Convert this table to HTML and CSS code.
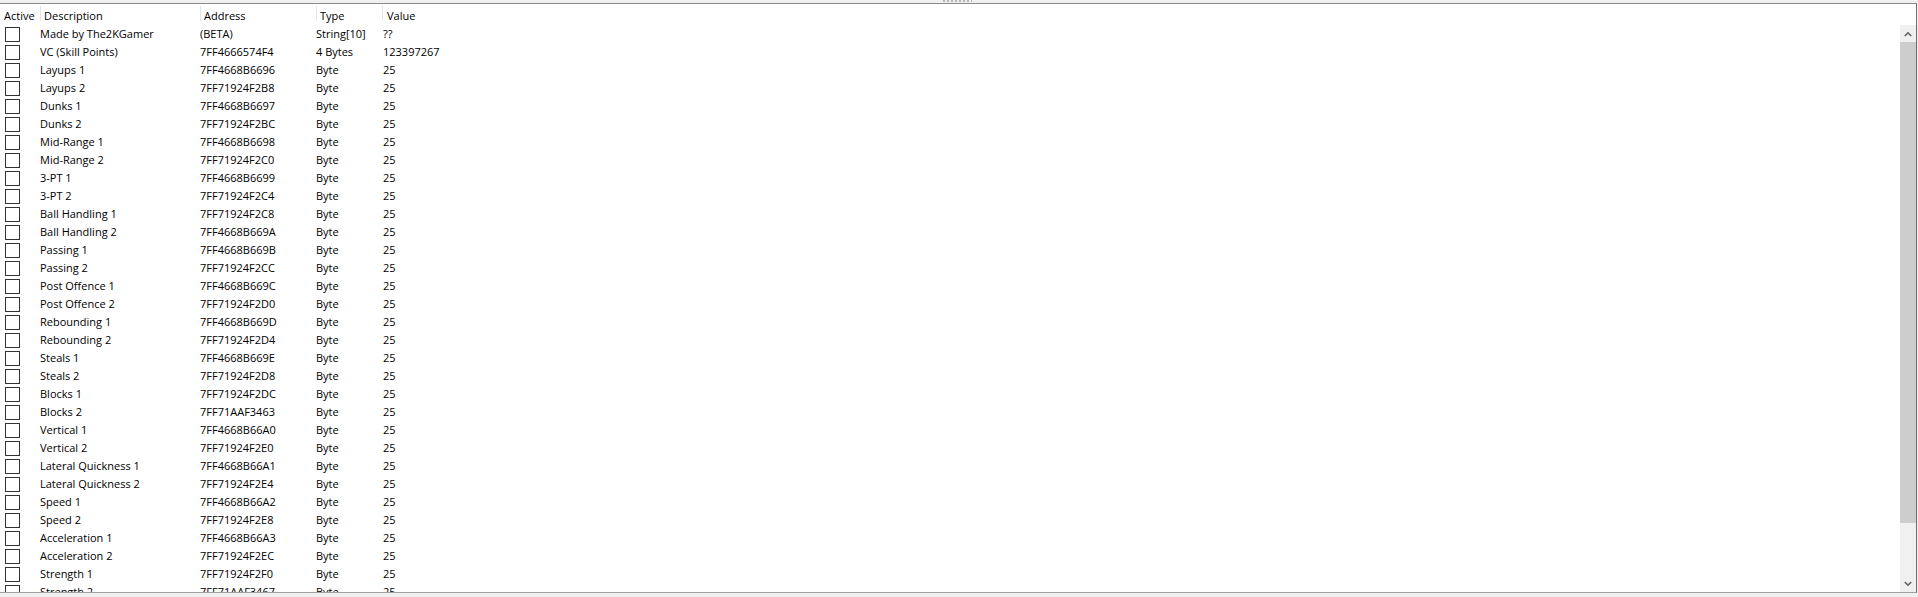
FILE: index.html
```html
<!DOCTYPE html>
<html>
<head>
<meta charset="utf-8">
<link rel="stylesheet" href="styles.css">
</head>
<body>
<div class="topband"><div class="grip"></div></div>
<div class="panel">
  <div class="header">
    <div class="hcell c-active">Active</div>
    <div class="hcell c-desc sep">Description</div>
    <div class="hcell c-addr sep">Address</div>
    <div class="hcell c-type sep">Type</div>
    <div class="hcell c-val sep">Value</div>
  </div>
  <div class="body">
    <div class="list">
      <div class="row"><div class="c-active"><span class="box"></span></div><div class="c-desc">Made by The2KGamer</div><div class="c-addr">(BETA)</div><div class="c-type">String[10]</div><div class="c-val">??</div></div>
      <div class="row"><div class="c-active"><span class="box"></span></div><div class="c-desc">VC (Skill Points)</div><div class="c-addr">7FF4666574F4</div><div class="c-type">4 Bytes</div><div class="c-val">123397267</div></div>
      <div class="row"><div class="c-active"><span class="box"></span></div><div class="c-desc">Layups 1</div><div class="c-addr">7FF4668B6696</div><div class="c-type">Byte</div><div class="c-val">25</div></div>
      <div class="row"><div class="c-active"><span class="box"></span></div><div class="c-desc">Layups 2</div><div class="c-addr">7FF71924F2B8</div><div class="c-type">Byte</div><div class="c-val">25</div></div>
      <div class="row"><div class="c-active"><span class="box"></span></div><div class="c-desc">Dunks 1</div><div class="c-addr">7FF4668B6697</div><div class="c-type">Byte</div><div class="c-val">25</div></div>
      <div class="row"><div class="c-active"><span class="box"></span></div><div class="c-desc">Dunks 2</div><div class="c-addr">7FF71924F2BC</div><div class="c-type">Byte</div><div class="c-val">25</div></div>
      <div class="row"><div class="c-active"><span class="box"></span></div><div class="c-desc">Mid-Range 1</div><div class="c-addr">7FF4668B6698</div><div class="c-type">Byte</div><div class="c-val">25</div></div>
      <div class="row"><div class="c-active"><span class="box"></span></div><div class="c-desc">Mid-Range 2</div><div class="c-addr">7FF71924F2C0</div><div class="c-type">Byte</div><div class="c-val">25</div></div>
      <div class="row"><div class="c-active"><span class="box"></span></div><div class="c-desc">3-PT 1</div><div class="c-addr">7FF4668B6699</div><div class="c-type">Byte</div><div class="c-val">25</div></div>
      <div class="row"><div class="c-active"><span class="box"></span></div><div class="c-desc">3-PT 2</div><div class="c-addr">7FF71924F2C4</div><div class="c-type">Byte</div><div class="c-val">25</div></div>
      <div class="row"><div class="c-active"><span class="box"></span></div><div class="c-desc">Ball Handling 1</div><div class="c-addr">7FF71924F2C8</div><div class="c-type">Byte</div><div class="c-val">25</div></div>
      <div class="row"><div class="c-active"><span class="box"></span></div><div class="c-desc">Ball Handling 2</div><div class="c-addr">7FF4668B669A</div><div class="c-type">Byte</div><div class="c-val">25</div></div>
      <div class="row"><div class="c-active"><span class="box"></span></div><div class="c-desc">Passing 1</div><div class="c-addr">7FF4668B669B</div><div class="c-type">Byte</div><div class="c-val">25</div></div>
      <div class="row"><div class="c-active"><span class="box"></span></div><div class="c-desc">Passing 2</div><div class="c-addr">7FF71924F2CC</div><div class="c-type">Byte</div><div class="c-val">25</div></div>
      <div class="row"><div class="c-active"><span class="box"></span></div><div class="c-desc">Post Offence 1</div><div class="c-addr">7FF4668B669C</div><div class="c-type">Byte</div><div class="c-val">25</div></div>
      <div class="row"><div class="c-active"><span class="box"></span></div><div class="c-desc">Post Offence 2</div><div class="c-addr">7FF71924F2D0</div><div class="c-type">Byte</div><div class="c-val">25</div></div>
      <div class="row"><div class="c-active"><span class="box"></span></div><div class="c-desc">Rebounding 1</div><div class="c-addr">7FF4668B669D</div><div class="c-type">Byte</div><div class="c-val">25</div></div>
      <div class="row"><div class="c-active"><span class="box"></span></div><div class="c-desc">Rebounding 2</div><div class="c-addr">7FF71924F2D4</div><div class="c-type">Byte</div><div class="c-val">25</div></div>
      <div class="row"><div class="c-active"><span class="box"></span></div><div class="c-desc">Steals 1</div><div class="c-addr">7FF4668B669E</div><div class="c-type">Byte</div><div class="c-val">25</div></div>
      <div class="row"><div class="c-active"><span class="box"></span></div><div class="c-desc">Steals 2</div><div class="c-addr">7FF71924F2D8</div><div class="c-type">Byte</div><div class="c-val">25</div></div>
      <div class="row"><div class="c-active"><span class="box"></span></div><div class="c-desc">Blocks 1</div><div class="c-addr">7FF71924F2DC</div><div class="c-type">Byte</div><div class="c-val">25</div></div>
      <div class="row"><div class="c-active"><span class="box"></span></div><div class="c-desc">Blocks 2</div><div class="c-addr">7FF71AAF3463</div><div class="c-type">Byte</div><div class="c-val">25</div></div>
      <div class="row"><div class="c-active"><span class="box"></span></div><div class="c-desc">Vertical 1</div><div class="c-addr">7FF4668B66A0</div><div class="c-type">Byte</div><div class="c-val">25</div></div>
      <div class="row"><div class="c-active"><span class="box"></span></div><div class="c-desc">Vertical 2</div><div class="c-addr">7FF71924F2E0</div><div class="c-type">Byte</div><div class="c-val">25</div></div>
      <div class="row"><div class="c-active"><span class="box"></span></div><div class="c-desc">Lateral Quickness 1</div><div class="c-addr">7FF4668B66A1</div><div class="c-type">Byte</div><div class="c-val">25</div></div>
      <div class="row"><div class="c-active"><span class="box"></span></div><div class="c-desc">Lateral Quickness 2</div><div class="c-addr">7FF71924F2E4</div><div class="c-type">Byte</div><div class="c-val">25</div></div>
      <div class="row"><div class="c-active"><span class="box"></span></div><div class="c-desc">Speed 1</div><div class="c-addr">7FF4668B66A2</div><div class="c-type">Byte</div><div class="c-val">25</div></div>
      <div class="row"><div class="c-active"><span class="box"></span></div><div class="c-desc">Speed 2</div><div class="c-addr">7FF71924F2E8</div><div class="c-type">Byte</div><div class="c-val">25</div></div>
      <div class="row"><div class="c-active"><span class="box"></span></div><div class="c-desc">Acceleration 1</div><div class="c-addr">7FF4668B66A3</div><div class="c-type">Byte</div><div class="c-val">25</div></div>
      <div class="row"><div class="c-active"><span class="box"></span></div><div class="c-desc">Acceleration 2</div><div class="c-addr">7FF71924F2EC</div><div class="c-type">Byte</div><div class="c-val">25</div></div>
      <div class="row"><div class="c-active"><span class="box"></span></div><div class="c-desc">Strength 1</div><div class="c-addr">7FF71924F2F0</div><div class="c-type">Byte</div><div class="c-val">25</div></div>
      <div class="row"><div class="c-active"><span class="box"></span></div><div class="c-desc">Strength 2</div><div class="c-addr">7FF71AAF3467</div><div class="c-type">Byte</div><div class="c-val">25</div></div>
    </div>
    <div class="vscroll">
      <div class="sbtn"><svg width="8" height="6" viewBox="0 0 8 6"><polyline points="0.8,5 4,1.8 7.2,5" fill="none" stroke="#606060" stroke-width="1.6"/></svg></div>
      <div class="thumb"></div>
      <div class="track"></div>
      <div class="sbtn"><svg width="8" height="6" viewBox="0 0 8 6"><polyline points="0.8,1 4,4.2 7.2,1" fill="none" stroke="#606060" stroke-width="1.6"/></svg></div>
    </div>
  </div>
</div>
</body>
</html>
```

FILE: styles.css
```css
html, body {
  margin: 0;
  padding: 0;
}
body {
  width: 1918px;
  height: 597px;
  background: #f0f0f0;
  overflow: hidden;
  font-family: "Open Sans", "Noto Sans", sans-serif;
  font-size: 11px;
  color: #000;
}
.topband {
  height: 3px;
  display: flex;
  justify-content: center;
  padding-right: 3px;
}
.grip {
  width: 29px;
  height: 2px;
  background: repeating-linear-gradient(90deg, #b4b4b4 0 2px, transparent 2px 4px);
}
.panel {
  width: 1916px;
  height: 588px;
  border-top: 1px solid #8a8a8a;
  border-right: 1px solid #6e6e6e;
  border-bottom: 1px solid #a0a0a0;
  background: #fff;
  display: flex;
  flex-direction: column;
}
.header {
  height: 21px;
  display: flex;
  flex: none;
}
.hcell {
  position: relative;
  padding: 2px 0 0 4px;
  line-height: 19px;
  box-sizing: border-box;
  white-space: nowrap;
}
.hcell.sep::before {
  content: "";
  position: absolute;
  left: 0;
  top: 2px;
  height: 15px;
  width: 1px;
  background: #e5e5e5;
}
.c-active { width: 40px; flex: none; }
.c-desc { width: 160px; flex: none; }
.c-addr { width: 116px; flex: none; }
.c-type { width: 66px; flex: none; }
.c-val { flex: 1; }
.hcell.c-val { padding-left: 5px; }
.body {
  flex: 1;
  display: flex;
  min-height: 0;
}
.list {
  flex: 1;
  overflow: hidden;
}
.row {
  height: 18px;
  line-height: 18px;
  display: flex;
  white-space: nowrap;
}
.row .c-active {
  display: flex;
  align-items: center;
  padding-left: 5px;
  box-sizing: border-box;
}
.row .c-val { padding-left: 1px; }
.box {
  width: 13px;
  height: 13px;
  border: 1px solid #333;
  background: #fff;
}
.vscroll {
  width: 16px;
  flex: none;
  display: flex;
  flex-direction: column;
  background: #f0f0f0;
}
.sbtn {
  height: 17px;
  flex: none;
  display: flex;
  align-items: center;
  justify-content: center;
}
.thumb {
  height: 481px;
  flex: none;
  background: #cdcdcd;
}
.track {
  flex: 1;
}
```
